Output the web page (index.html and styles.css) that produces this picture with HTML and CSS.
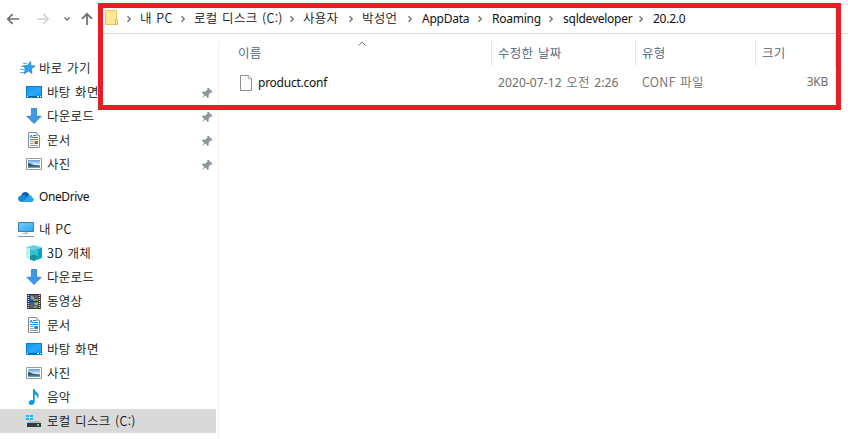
FILE: index.html
```html
<!DOCTYPE html>
<html lang="ko">
<head>
<meta charset="utf-8">
<title>20.2.0</title>
<link rel="stylesheet" href="styles.css">
</head>
<body>
<svg class="defs" aria-hidden="true">
  <defs>
    <linearGradient id="blue" x1="0" y1="0" x2="1" y2="1"><stop offset="0" stop-color="#1197f2"/><stop offset=".55" stop-color="#2da8fb"/><stop offset="1" stop-color="#1197f2"/></linearGradient>
    <linearGradient id="screen" x1="0" y1="0" x2="1" y2="1"><stop offset="0" stop-color="#79cffc"/><stop offset="1" stop-color="#2ba2f5"/></linearGradient>
    <linearGradient id="photo" x1="0" y1="0" x2="0" y2="1"><stop offset="0" stop-color="#5b9ee0"/><stop offset=".6" stop-color="#e4f3fb"/><stop offset="1" stop-color="#4b8bb4"/></linearGradient>
    <symbol id="desktop" viewBox="0 0 16 16"><path fill="#087fc9" d="M0 2h16v12H0z"/><path fill="url(#blue)" d="M1 3h14v10H1z"/><path fill="#075c94" d="M1 12h14v1H1z"/><path fill="#fff" d="M1 12h1v1H1zM11 12h2v1h-2zM14 12h1v1h-1z"/></symbol>
    <symbol id="down" viewBox="0 0 16 16"><path fill="#3b99e8" stroke="#287fc9" stroke-width=".8" d="M5.4.5h5.200v7.800h4.600L8 15.500.8 8.300h4.600z"/></symbol>
    <symbol id="doc" viewBox="0 0 16 16"><path fill="#fff" stroke="#8a8a8a" d="M2.500.5h8l3 3v12h-11z"/><path fill="#ddd" stroke="#999" stroke-width=".7" d="M10.500.5v3h3"/><path stroke="#1688d5" d="M7 3.500h3M7 5.500h5M4 7.500h8"/><path stroke="#999" d="M4 9.500h3.500M4 11.500h3.500M4 13.500h8"/><path fill="none" stroke="#1688d5" d="M4 6l1.300-3L6.500 6"/><path fill="#2484bd" d="M8.500 9H12v3H8.500z"/></symbol>
    <symbol id="pic" viewBox="0 0 16 16"><path fill="#fff" stroke="#999" d="M.5 2.500h15v11H.5z"/><path fill="url(#photo)" d="M2 4h12v8H2z"/><path fill="#315f68" d="M2 7c3 0 4 2 7 2l5 .6v1.100H2z"/></symbol>
    <symbol id="pin" viewBox="0 0 12 12"><path fill="#8c959b" d="M7.200.4l4.500 4.500-1 .9-1-.2-2.100 2.100.1 2.500-1 .9-2.400-2.500L.5 11.700 3.300 8 .8 5.600l.9-1 2.500.1L6.500 2.500 6.200 1.400z"/></symbol>
    <symbol id="chev" viewBox="0 0 6 8"><path fill="none" stroke="#777" stroke-width="1.500" d="M1.500 1.300L4.200 4 1.500 6.700"/></symbol>
  </defs>
</svg>
<div class="window">
  <header class="toolbar">
    <div class="nav">
      <svg class="arrow" viewBox="0 0 14 14"><path d="M13 7H1.800M6.600 2.200L1.800 7l4.800 4.800"/></svg>
      <svg class="arrow off" viewBox="0 0 14 14"><path d="M1 7h11.200M7.400 2.200L12.200 7l-4.800 4.800"/></svg>
      <svg class="history" viewBox="0 0 8 6"><path d="M1.500 1.500L4 4l2.500-2.500"/></svg>
      <svg class="arrow up" viewBox="0 0 14 14"><path d="M7 13V1.800M2 6.800l5-5 5 5"/></svg>
    </div>
    <div class="address">
      <svg class="folder" viewBox="0 0 14 16"><path fill="#ffe794" stroke="#e9c75f" d="M.5.5h11v14H.5z"/><path fill="#ffeaa0" stroke="#e3bb50" d="M10.500 9.500h2v5h-2z"/></svg>
      <div class="crumbs">
        <span><svg><use href="#chev"/></svg>내 PC</span>
        <span><svg><use href="#chev"/></svg>로컬 디스크 (C:)</span>
        <span><svg><use href="#chev"/></svg>사용자</span>
        <span><svg><use href="#chev"/></svg>박성언</span>
        <span class="latin"><svg><use href="#chev"/></svg>AppData</span>
        <span class="latin"><svg><use href="#chev"/></svg>Roaming</span>
        <span class="latin"><svg><use href="#chev"/></svg>sqldeveloper</span>
        <span class="latin"><svg><use href="#chev"/></svg>20.2.0</span>
      </div>
    </div>
  </header>
  <div class="body">
    <nav class="sidebar">
      <div class="row root quick"><svg class="icon" viewBox="0 0 16 16"><path fill="#2ba0ed" stroke="#167bbd" stroke-width=".7" d="M10.600 1.500l.2 4.200 4.300.2-3.600 2.900.5 4.700-3.400-2.600-4.600 3 1.600-4.900L3 5.800l4.400-.2z"/><path stroke="#56aee5" d="M3 3.500h4M1 6.500h3M0 9.500h5M0 12.500h4"/></svg><span>바로 가기</span></div>
      <div class="row"><svg class="icon"><use href="#desktop"/></svg><span>바탕 화면</span><svg class="pin"><use href="#pin"/></svg></div>
      <div class="row"><svg class="icon"><use href="#down"/></svg><span>다운로드</span><svg class="pin"><use href="#pin"/></svg></div>
      <div class="row"><svg class="icon"><use href="#doc"/></svg><span>문서</span><svg class="pin"><use href="#pin"/></svg></div>
      <div class="row"><svg class="icon"><use href="#pic"/></svg><span>사진</span><svg class="pin"><use href="#pin"/></svg></div>
      <div class="row root cloud"><svg class="icon" viewBox="0 0 16 16"><path fill="#0a5eb7" d="M3 7C4 2 9.500 1.500 11.500 6l-3 6H4z"/><path fill="#1488db" d="M3 6.500C5 5.500 6.500 6 9 7.700L12 13H4C-1 13-1 7 3 6.500z"/><path fill="#28a8ea" d="M4 13l5-4c1-4 5-3 5.200-.5C16.500 9 16.500 13 13 13z"/></svg><span class="latin">OneDrive</span></div>
      <div class="row root pc"><svg class="icon" viewBox="0 0 16 16"><path fill="url(#screen)" stroke="#3480ae" d="M.5 1.500h15v9H.5z"/><path fill="#aebbc4" d="M7 11h2v1h2v1H5v-1h2z"/><path fill="#8299ae" d="M0 15h16v1H0z"/></svg><span>내 PC</span></div>
      <div class="row"><svg class="icon" viewBox="0 0 16 16"><path fill="#62d3dc" d="M0 2.500L8 0l8 2.500L8 5z"/><path fill="#c4f0ee" d="M0 2.500L8 5v11l-8-3z"/><path fill="#07a4c6" d="M16 2.500L8 5v11l8-3z"/><path fill="#35bfcc" d="M4 4l4 1 4-1.200V12l-4 4-4-5z"/><path fill="#168f9f" d="M4 11l4-1.500 4 2L8 16l-4-1.500z"/></svg><span>3D 개체</span></div>
      <div class="row"><svg class="icon"><use href="#down"/></svg><span>다운로드</span></div>
      <div class="row"><svg class="icon" viewBox="0 0 16 16"><path fill="#37363b" d="M1 1h14v15H1z"/><path stroke="#ddd" stroke-width="1.500" stroke-dasharray="1 1" d="M2.500 2v14M13.500 2v14"/><path fill="#2965b7" d="M4 2h8v6H4zM4 9h8v6H4z"/><path fill="#d5a629" d="M5 3l3 1v2H5zM8 10l4-1v3H9z"/><path fill="#b74036" d="M10 2h2v3h-2zM4 12h3v2H4z"/><path fill="#6caf49" d="M7 6h5v2H7zM8 13h3v2H8z"/></svg><span>동영상</span></div>
      <div class="row"><svg class="icon"><use href="#doc"/></svg><span>문서</span></div>
      <div class="row"><svg class="icon"><use href="#desktop"/></svg><span>바탕 화면</span></div>
      <div class="row"><svg class="icon"><use href="#pic"/></svg><span>사진</span></div>
      <div class="row"><svg class="icon" viewBox="0 0 16 16"><path fill="#109bea" d="M7 0h1.500c.5 3 4.700 3.500 4.200 7.500-.2 1-.7 2-1.200 2.500.5-2.800-.8-4-2.800-4.500v7.200c0 3.800-6 4.400-6 1 0-2.300 2.200-3.200 4.300-2.500z"/></svg><span>음악</span></div>
      <div class="row selected"><svg class="icon" viewBox="0 0 16 16"><path fill="#13b7e8" d="M0 2h3v2H0zM4 2h3v2H4zM0 5h3v2H0zM4 5h3v2H4z"/><path fill="#b5b8ba" d="M3 8h10l2 2H1z"/><path fill="#35393b" d="M1 10h14v4H1z"/><path fill="#4ce069" d="M11 11h2v2h-2z"/></svg><span>로컬 디스크 (C:)</span></div>
    </nav>
    <main class="files">
      <div class="head">
        <div class="name">이름<svg class="sort" viewBox="0 0 8 5"><path d="M.5 4.500L4 1l3.500 3.500"/></svg></div><div>수정한 날짜</div><div>유형</div><div>크기</div>
      </div>
      <div class="file">
        <div class="filename"><svg viewBox="0 0 13 16"><path fill="#fafafa" stroke="#8d8d8d" d="M.5.5h8l3 3v12H.5z"/><path fill="#fff" stroke="#999" stroke-width=".8" d="M8.300.5v3.200h3.200"/></svg><span class="latin">product.conf</span></div>
        <div class="date"><span class="latin">2020-07-12</span> 오전 <span class="latin">2:26</span></div><div>CONF 파일</div><div class="size latin">3KB</div>
      </div>
    </main>
  </div>
  <div class="highlight"></div>
</div>
</body>
</html>
```
FILE: styles.css
```css
* { box-sizing: border-box; }
body { margin: 0; background: #fff; color: #111; font: 350 12.5px/24px "Noto Sans CJK KR", sans-serif; letter-spacing: .3px; word-spacing: .7px; }
svg { display: block; flex: none; }
.defs { position: absolute; width: 0; height: 0; }
.window { position: relative; width: 848px; height: 439px; overflow: hidden; white-space: nowrap; }
.latin { font-family: "Noto Sans", sans-serif; font-size: 12px; font-weight: 400; letter-spacing: -.25px; }
.toolbar { display: flex; height: 34px; }
.nav { display: flex; align-items: center; width: 103px; padding: 4px 0 0 6px; }
.arrow { width: 14px; height: 14px; fill: none; stroke: #6d6d6d; stroke-width: 1.7; }
.arrow.off { margin-left: 16px; stroke: #d2d2d2; }
.history { width: 8px; height: 6px; margin: 0 0 1px 13px; fill: none; stroke: #777; stroke-width: 1.5; }
.arrow.up { margin-left: 9px; }
.address { display: flex; flex: 1; padding: 6px 0 0 2px; border-bottom: 1px solid #d9d9d9; background: linear-gradient(#d9d9d9, #d9d9d9) right 4px / 12px 1px no-repeat; }
.folder { width: 14px; height: 16px; margin-top: 4px; }
.crumbs { display: grid; grid-template-columns: 54px 109px 59px 59px 70px 71px 90px 60px; margin-left: 7px; }
.crumbs span { display: flex; align-items: center; height: 24px; }
.crumbs .latin { padding-top: 1px; }
.crumbs svg { width: 6px; height: 8px; margin: 2px 8px 0 0; }
.crumbs .latin svg { margin: 1px 9px 0 0; }
.body { display: flex; height: 405px; }
.sidebar { width: 219px; padding-top: 22px; background: linear-gradient(#f2f2f2, #f2f2f2) 218px 7px / 1px 100% no-repeat; }
.row { display: flex; align-items: center; width: 216px; height: 24px; padding: 0 3px 0 26px; }
.row.root { padding-left: 18px; }
.row span { margin-left: 5px; }
.row.quick { padding-left: 20px; }
.quick span { margin-left: 3px; }
.cloud { margin-top: 9px; }
.cloud .latin { letter-spacing: -.4px; }
.pc { margin-top: 8px; }
.icon { width: 16px; height: 16px; }
.pin { width: 12px; height: 12px; margin: 1px 0 0 auto; }
.selected { background: #d9d9d9; }
.files { flex: 1; padding-top: 7px; }
.head, .file { display: grid; grid-template-columns: 273px 144px 120px 80px; }
.head { height: 25px; color: #4c607a; }
.head div { padding-left: 6px; border-right: 1px solid #e5e5e5; }
.head .name { display: flex; padding-left: 19px; }
.sort { width: 8px; height: 5px; margin: 0 0 0 96px; fill: none; stroke: #777; stroke-width: 1; }
.file { height: 24px; margin-top: 4px; color: #6d6d6d; }
.file > div { padding-left: 6px; }
.date .latin { letter-spacing: .1px; }
.file .filename { display: flex; align-items: center; padding-left: 21px; color: #111; }
.filename svg { width: 13px; height: 16px; }
.filename span { margin-left: 5px; }
.file .size { padding-right: 8px; text-align: right; }
.highlight { position: absolute; left: 98px; top: 3px; width: 743px; height: 107px; border: 5px solid #ed1c24; }
```
